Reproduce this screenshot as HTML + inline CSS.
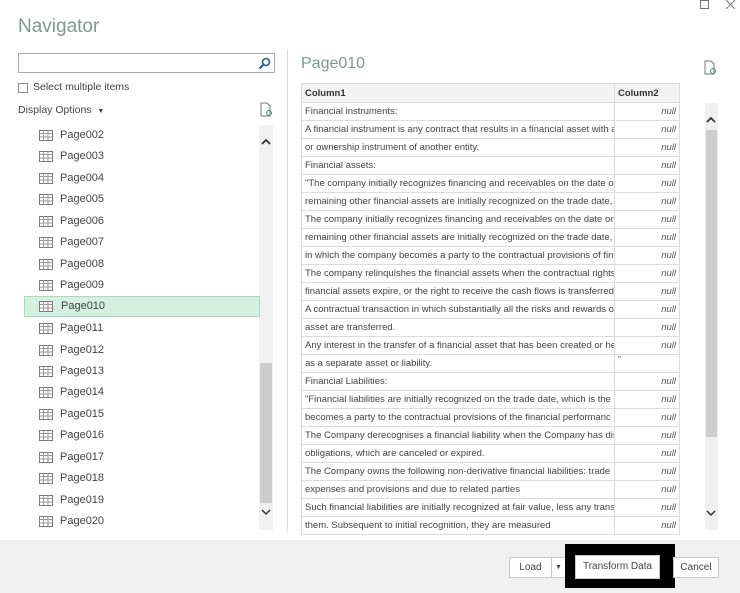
<!DOCTYPE html>
<html><head><meta charset="utf-8"><style>
*{margin:0;padding:0;box-sizing:border-box}
body{width:740px;height:593px;background:#fff;position:relative;overflow:hidden;font-family:"Liberation Sans",sans-serif;color:#333}
.a{position:absolute}
.item{position:absolute;left:24px;width:236px;height:21px;font-size:11px;line-height:21px;padding-left:36px;color:#444}
.item svg{position:absolute;left:15px;top:5px}
.sel{background:#d5efe1;border:1px solid #a6dcbd;line-height:19px}
.sel svg{top:4px;left:14px}
table{border-collapse:collapse;font-size:9.5px;table-layout:fixed}
td{border:1px solid #dcdcdc;height:18px;padding:0 3px;white-space:nowrap;overflow:hidden;color:#444}
td.n{text-align:right;font-style:italic;color:#555}
th{border:1px solid #dcdcdc;height:19px;text-align:left;padding:0 3px;font-size:9.5px;background:#f3f3f3;color:#333}
.btn{position:absolute;top:557px;height:21px;border:1px solid #c8c8c8;background:#fff;font-size:10px;line-height:19px;text-align:center;color:#444}
</style></head><body>
<div class="a" style="left:18px;top:16px;font-size:19px;color:#7f9a8c">Navigator</div>
<div class="a" style="left:700px;top:0px;width:9px;height:9px;border:1px solid #777"></div>
<svg class="a" style="left:725px;top:0" width="11" height="9" viewBox="0 0 11 9"><path d="M1 0L10 9M10 0L1 9" stroke="#777"/></svg>
<div class="a" style="left:18px;top:53px;width:257px;height:20px;border:1px solid #aaa"></div>
<svg class="a" style="left:258px;top:57px" width="13" height="13" viewBox="0 0 13 13"><circle cx="8" cy="5" r="3.5" fill="none" stroke="#2a5d8a" stroke-width="1.6"/><path d="M5.5 7.5 L1.5 11.5" stroke="#2a5d8a" stroke-width="2"/></svg>
<div class="a" style="left:18px;top:83px;width:10px;height:10px;border:1px solid #888"></div>
<div class="a" style="left:33px;top:81px;font-size:10.5px;color:#444">Select multiple items</div>
<div class="a" style="left:18px;top:104px;font-size:10.5px;color:#444">Display Options &nbsp;<span style="font-size:7px">▼</span></div>
<svg class="a" style="left:260px;top:102px" width="13" height="15" viewBox="0 0 13 15"><path d="M1 1H7L10 4V14H1Z" fill="none" stroke="#777"/><circle cx="9" cy="11" r="2.5" fill="none" stroke="#3a9a6a"/></svg>
<svg class="a" style="left:704px;top:60px" width="13" height="15" viewBox="0 0 13 15"><path d="M1 1H7L10 4V14H1Z" fill="none" stroke="#777"/><circle cx="9" cy="11" r="2.5" fill="none" stroke="#3a9a6a"/></svg>
<div class="a" style="left:259px;top:125px;width:14px;height:405px;background:#f0f0f0"></div>
<div class="a" style="left:260px;top:363px;width:12px;height:140px;background:#cdcdcd"></div>
<svg class="a" style="left:261px;top:138px" width="10" height="8" viewBox="0 0 10 8"><path d="M1 6L5 2L9 6" fill="none" stroke="#333" stroke-width="1.8"/></svg>
<svg class="a" style="left:261px;top:508px" width="10" height="8" viewBox="0 0 10 8"><path d="M1 2L5 6L9 2" fill="none" stroke="#333" stroke-width="1.5"/></svg>
<div class="a" style="left:287px;top:50px;width:1px;height:482px;background:#ddd"></div>
<div id="list"></div>
<div class="a" style="left:301px;top:55px;font-size:16px;color:#7f9a8c">Page010</div>
<table class="a" style="left:301px;top:83px;width:378px">
<colgroup><col style="width:313px"><col style="width:65px"></colgroup>
<tr><th>Column1</th><th>Column2</th></tr>
<tbody id="tb"></tbody></table>
<div class="a" style="left:705px;top:103px;width:13px;height:427px;background:#f0f0f0"></div>
<div class="a" style="left:706px;top:130px;width:11px;height:307px;background:#cdcdcd"></div>
<svg class="a" style="left:706px;top:116px" width="10" height="8" viewBox="0 0 10 8"><path d="M1 6L5 2L9 6" fill="none" stroke="#333" stroke-width="1.8"/></svg>
<svg class="a" style="left:706px;top:509px" width="10" height="8" viewBox="0 0 10 8"><path d="M1 2L5 6L9 2" fill="none" stroke="#333" stroke-width="1.5"/></svg>
<div class="a" style="left:0;top:540px;width:740px;height:53px;background:#f0f0f0"></div>
<div class="btn" style="left:509px;width:43px">Load</div>
<div class="btn" style="left:551px;width:15px;font-size:7px">▼</div>
<div class="a" style="left:565px;top:544px;width:110px;height:44px;background:#000"></div>
<div class="btn" style="left:575px;top:555px;width:85px;height:24px;line-height:22px">Transform Data</div>
<div class="btn" style="left:673px;width:46px">Cancel</div>
<script>
var l='';for(var i=2;i<=20;i++){var y=125+(i-2)*21.45;var s=i==10;
l+='<div class="item'+(s?' sel':'')+'" style="top:'+(y-(s?1:0))+'px"><svg width="14" height="11" viewBox="0 0 14 11"><rect x=".5" y=".5" width="13" height="10" fill="#fff" stroke="#777"/><path d="M.5 3.5H13.5M4.5 .5V10.5M9 .5V10.5M.5 7H13.5" stroke="#999" fill="none"/></svg>Page0'+(i<10?'0':'')+i+'</div>';}
document.getElementById('list').innerHTML=l;
var r=["Financial instruments:","A financial instrument is any contract that results in a financial asset with a","or ownership instrument of another entity.","Financial assets:","\"The company initially recognizes financing and receivables on the date or","remaining other financial assets are initially recognized on the trade date,","The company initially recognizes financing and receivables on the date on","remaining other financial assets are initially recognized on the trade date,","in which the company becomes a party to the contractual provisions of fin","The company relinquishes the financial assets when the contractual rights","financial assets expire, or the right to receive the cash flows is transferred","A contractual transaction in which substantially all the risks and rewards o","asset are transferred.","Any interest in the transfer of a financial asset that has been created or he","as a separate asset or liability.","Financial Liabilities:","\"Financial liabilities are initially recognized on the trade date, which is the","becomes a party to the contractual provisions of the financial performanc","The Company derecognises a financial liability when the Company has disc","obligations, which are canceled or expired.","The Company owns the following non-derivative financial liabilities: trade","expenses and provisions and due to related parties","Such financial liabilities are initially recognized at fair value, less any transa","them. Subsequent to initial recognition, they are measured"];
var t='';r.forEach(function(x,i){t+='<tr><td>'+x+'</td>'+(i==14?'<td style="font-size:8px;vertical-align:top">"</td>':'<td class="n">null</td>')+'</tr>';});
document.getElementById('tb').innerHTML=t;
</script>
</body></html>
